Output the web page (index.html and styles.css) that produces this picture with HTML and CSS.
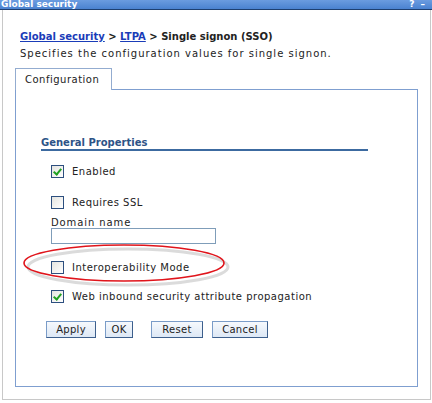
FILE: index.html
```html
<!DOCTYPE html>
<html>
<head>
    <title>Single signon (SSO)</title>
    <link rel="stylesheet" href="styles.css">
</head>
<body>
    <div class="titlebar">
        <span class="title">Global security</span>
        <span class="tools"><span class="help">?</span><span class="min">&ndash;</span></span>
    </div>

    <div class="frame">
        <div class="crumbs">
            <a href="#">Global security</a> &gt; <a href="#">LTPA</a> &gt; Single signon (SSO)
        </div>
        <p class="desc">Specifies the configuration values for single signon.</p>

        <div class="tabs">
            <div class="tab">Configuration</div>
        </div>

        <div class="panel">
            <h3 class="section">General Properties</h3>

            <div class="row enabled">
                <span class="box checked"></span><span class="label">Enabled</span>
            </div>
            <div class="row ssl">
                <span class="box"></span><span class="label">Requires SSL</span>
            </div>
            <div class="field">
                <div class="field-label">Domain name</div>
                <div class="input"></div>
            </div>
            <div class="row interop">
                <span class="box"></span><span class="label">Interoperability Mode</span>
                <!-- red annotation circle drawn over the form -->
                <svg class="ring" width="210" height="46" viewBox="0 0 210 46">
                    <ellipse cx="104" cy="21" rx="100" ry="18" fill="none" stroke="#999" stroke-width="3" opacity="0.35" transform="translate(2 2)"/>
                    <ellipse cx="102" cy="19" rx="100" ry="18" fill="none" stroke="#e0141b" stroke-width="1.6"/>
                </svg>
            </div>
            <div class="row web">
                <span class="box checked"></span><span class="label">Web inbound security attribute propagation</span>
            </div>

            <div class="buttons">
                <button class="btn btn-apply">Apply</button>
                <button class="btn btn-ok">OK</button>
                <button class="btn btn-reset">Reset</button>
                <button class="btn btn-cancel">Cancel</button>
            </div>
        </div>
    </div>
</body>
</html>
```

FILE: styles.css
```css
body {
    margin: 0;
    width: 432px;
    height: 403px;
    background: #fff;
    font-family: 'DejaVu Sans', Verdana, sans-serif;
    font-size: 10px;
    color: #111;
    overflow: hidden;
}
.titlebar {
    height: 9px;
    display: flex;
    justify-content: space-between;
    align-items: center;
    background: linear-gradient(#6b9ce0, #4a82d0);
    border-bottom: 1px solid #1e3f70;
    color: #fff;
}
.title {
    font-weight: bold;
    font-size: 9px;
    line-height: 9px;
    padding-left: 1px;
}
.tools {
    display: flex;
    gap: 6px;
    padding-right: 7px;
    font-weight: bold;
    font-size: 9px;
    line-height: 9px;
}
.frame {
    margin: 0 1px 0 2px;
    height: 389px;
    border: 1px solid #c8c8c8;
    border-top: none;
    padding: 0 12px 0 12px;
}
.crumbs {
    padding: 20px 0 0 5px;
    font-weight: bold;
    font-size: 10px;
    line-height: 13px;
    color: #222;
}
.crumbs a {
    color: #1a3cb8;
    text-decoration: underline;
}
.desc {
    margin: 4px 0 0 5px;
    line-height: 13px;
    letter-spacing: 1px;
    color: #222;
}
.tabs {
    display: flex;
    margin-top: 7px;
}
.tab {
    width: 86px;
    height: 21px;
    line-height: 22px;
    padding-left: 9px;
    letter-spacing: 0.5px;
    border: 1px solid #93acd0;
    border-bottom: none;
    color: #222;
    background: #fff;
    position: relative;
    top: 1px;
}
.panel {
    width: 403px;
    height: 298px;
    border: 1px solid #7f9fd0;
    padding: 0 0 0 25px;
    box-sizing: border-box;
}
.section {
    margin: 46px 0 0 0;
    width: 327px;
    font-size: 10px;
    line-height: 13px;
    color: #2d5387;
    border-bottom: 2px solid #3c6aa0;
    padding-bottom: 0;
}
.row {
    display: flex;
    align-items: center;
    margin-left: 10px;
    height: 14px;
    position: relative;
}
.row.enabled { margin-top: 13px; }
.row.ssl { margin-top: 17px; }
.row.interop { margin-top: 16px; }
.row.web { margin-top: 15px; }
.box {
    width: 11px;
    height: 11px;
    border: 1px solid #2d4f7f;
    background: linear-gradient(135deg, #e4e4e0, #fff);
    position: relative;
}
.box.checked::after {
    content: '';
    position: absolute;
    left: 3px;
    top: 1px;
    width: 3px;
    height: 6px;
    border: solid #21a121;
    border-width: 0 2px 2px 0;
    transform: rotate(40deg);
}
.label {
    margin-left: 8px;
    letter-spacing: 0.5px;
    color: #222;
}
.field {
    margin: 8px 0 0 10px;
}
.field-label {
    line-height: 11px;
    letter-spacing: 0.9px;
    color: #222;
}
.input {
    width: 163px;
    height: 14px;
    border: 1px solid #7f9db9;
}
.ring {
    position: absolute;
    left: -29px;
    top: -16px;
}
.buttons {
    display: flex;
    margin: 18px 0 0 5px;
}
.btn {
    height: 17px;
    padding: 0;
    font-family: 'DejaVu Sans', Verdana, sans-serif;
    font-size: 10px;
    letter-spacing: 0.3px;
    color: #222;
    border: 1px solid #7a9cc8;
    border-right-color: #3d5f8c;
    border-bottom-color: #3d5f8c;
    background: linear-gradient(#f6f9fd, #dde8f5);
}
.btn-apply { width: 50px; }
.btn-ok { width: 28px; margin-left: 9px; }
.btn-reset { width: 52px; margin-left: 18px; }
.btn-cancel { width: 56px; margin-left: 9px; }
```
